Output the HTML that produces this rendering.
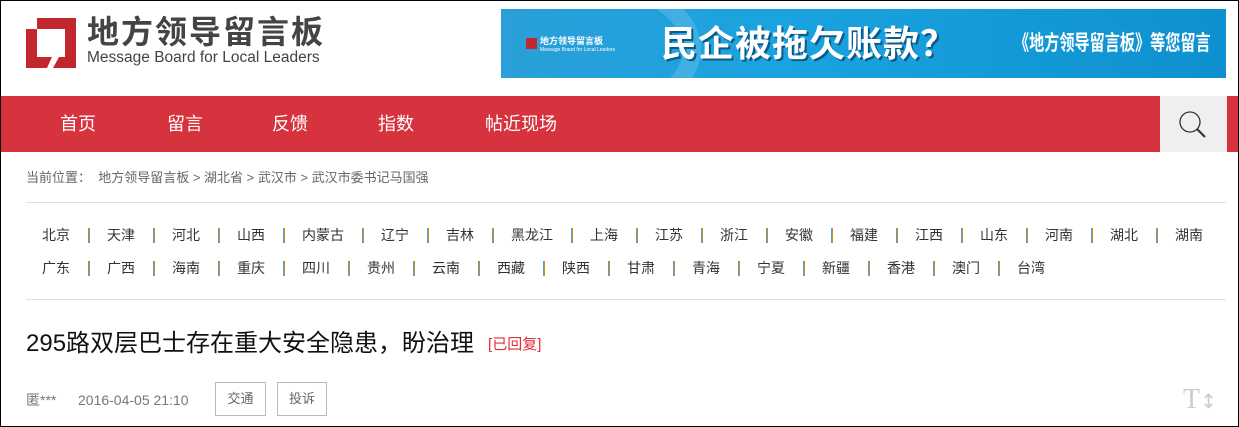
<!DOCTYPE html>
<html><head><meta charset="utf-8"><style>
*{margin:0;padding:0;box-sizing:border-box}
body{width:1239px;height:427px;overflow:hidden;background:#fff;font-family:"Liberation Sans","Noto Sans CJK SC",sans-serif;position:relative;border:1px solid #000}
.abs{position:absolute}
.nav{left:0;top:95px;width:1237px;height:56px;background:#d7333f}
.nav span{position:absolute;top:17px;color:#fff;font-size:18px;line-height:22px}
.srch{left:1159px;top:95px;width:67px;height:56px;background:#efefef}
.crumb{left:25px;top:168px;font-size:13px;color:#666;line-height:18px}
.hr{left:25px;height:1px;width:1200px;background:#e0e0e0}
.row{left:41px;font-size:14px;color:#333;line-height:18px;white-space:nowrap}
.row span{display:inline-block}
.row i{display:inline-block;width:2px;height:15px;vertical-align:-3px;margin:0 17px 0 18px;background:linear-gradient(90deg,#5a9ad0 50%,#c8901e 50%)}
.title{left:25px;top:328px;font-size:24px;color:#111;line-height:30px}
.title em{font-style:normal;font-size:15px;color:#e0303a;margin-left:14px;vertical-align:2px}
.meta{top:390px;font-size:14px;color:#777;line-height:18px}
.tag{top:381px;height:34px;border:1px solid #bbb;font-size:13px;color:#666;line-height:32px;text-align:center}
</style></head><body>
<svg class="abs" style="left:25px;top:17px" width="50" height="50" viewBox="0 0 50 50">
<rect width="50" height="50" fill="#c1272d"/>
<rect width="11" height="11" fill="#fff"/>
<rect x="11" y="11" width="28" height="28" fill="#fff"/>
<polygon points="26,39 33,39 27,50 21,50" fill="#fff"/>
</svg>
<div class="abs" style="left:86px;top:12px;font-size:32px;font-weight:bold;color:#444;line-height:38px;letter-spacing:2px">地方领导留言板</div>
<div class="abs" style="left:86px;top:47px;font-size:15.5px;color:#444;line-height:20px">Message Board for Local Leaders</div>
<div class="abs" style="left:500px;top:8px;width:725px;height:69px;background:linear-gradient(90deg,#2a9fd8,#1aa3e0 40%,#0e90cf 100%);overflow:hidden">
<div class="abs" style="left:-60px;top:-40px;width:260px;height:160px;border-radius:50%;border:18px solid rgba(255,255,255,.15)"></div>
<div class="abs" style="left:25px;top:29px;width:11px;height:11px;background:#c1272d"></div>
<div class="abs" style="left:39px;top:27px;font-size:9px;color:#fff;font-weight:bold;line-height:10px">地方领导留言板</div>
<div class="abs" style="left:39px;top:38px;font-size:5px;color:#fff;line-height:6px">Message Board for Local Leaders</div>
<div class="abs" style="left:160px;top:13px;font-size:36px;font-weight:bold;color:#fff;line-height:44px;letter-spacing:1px;text-shadow:2px 2px 0 #0a5a8a">民企被拖欠账款？</div>
<div class="abs" style="left:513px;top:22px;font-size:21px;font-weight:bold;color:#fff;line-height:26px;white-space:nowrap;transform:scaleX(0.72);transform-origin:0 0">《地方领导留言板》等您留言</div>
</div>
<div class="abs nav">
<span style="left:59px">首页</span><span style="left:166px">留言</span><span style="left:271px">反馈</span><span style="left:377px">指数</span><span style="left:484px">帖近现场</span>
</div>
<div class="abs srch"><svg width="67" height="56"><circle cx="30" cy="26" r="10" fill="none" stroke="#333" stroke-width="1.3"/><line x1="37" y1="33" x2="45" y2="41" stroke="#333" stroke-width="2.2"/></svg></div>
<div class="abs crumb">当前位置：&nbsp; 地方领导留言板 &gt; 湖北省 &gt; 武汉市 &gt; 武汉市委书记马国强</div>
<div class="abs hr" style="top:201px"></div>
<div class="abs row" style="top:225px"><span>北京</span><i></i><span>天津</span><i></i><span>河北</span><i></i><span>山西</span><i></i><span>内蒙古</span><i></i><span>辽宁</span><i></i><span>吉林</span><i></i><span>黑龙江</span><i></i><span>上海</span><i></i><span>江苏</span><i></i><span>浙江</span><i></i><span>安徽</span><i></i><span>福建</span><i></i><span>江西</span><i></i><span>山东</span><i></i><span>河南</span><i></i><span>湖北</span><i></i><span>湖南</span></div>
<div class="abs row" style="top:258px"><span>广东</span><i></i><span>广西</span><i></i><span>海南</span><i></i><span>重庆</span><i></i><span>四川</span><i></i><span>贵州</span><i></i><span>云南</span><i></i><span>西藏</span><i></i><span>陕西</span><i></i><span>甘肃</span><i></i><span>青海</span><i></i><span>宁夏</span><i></i><span>新疆</span><i></i><span>香港</span><i></i><span>澳门</span><i></i><span>台湾</span></div>
<div class="abs hr" style="top:298px"></div>
<div class="abs title">295路双层巴士存在重大安全隐患，盼治理<em>[已回复]</em></div>
<div class="abs meta" style="left:25px">匿***</div>
<div class="abs meta" style="left:77px">2016-04-05 21:10</div>
<div class="abs tag" style="left:214px;width:51px">交通</div>
<div class="abs tag" style="left:276px;width:50px">投诉</div>
<div class="abs" style="left:1182px;top:384px;font-family:'Liberation Serif',serif;font-size:28px;color:#ccc;line-height:30px">T<span style="font-size:20px;font-family:'DejaVu Sans'">↕</span></div>
</body></html>
